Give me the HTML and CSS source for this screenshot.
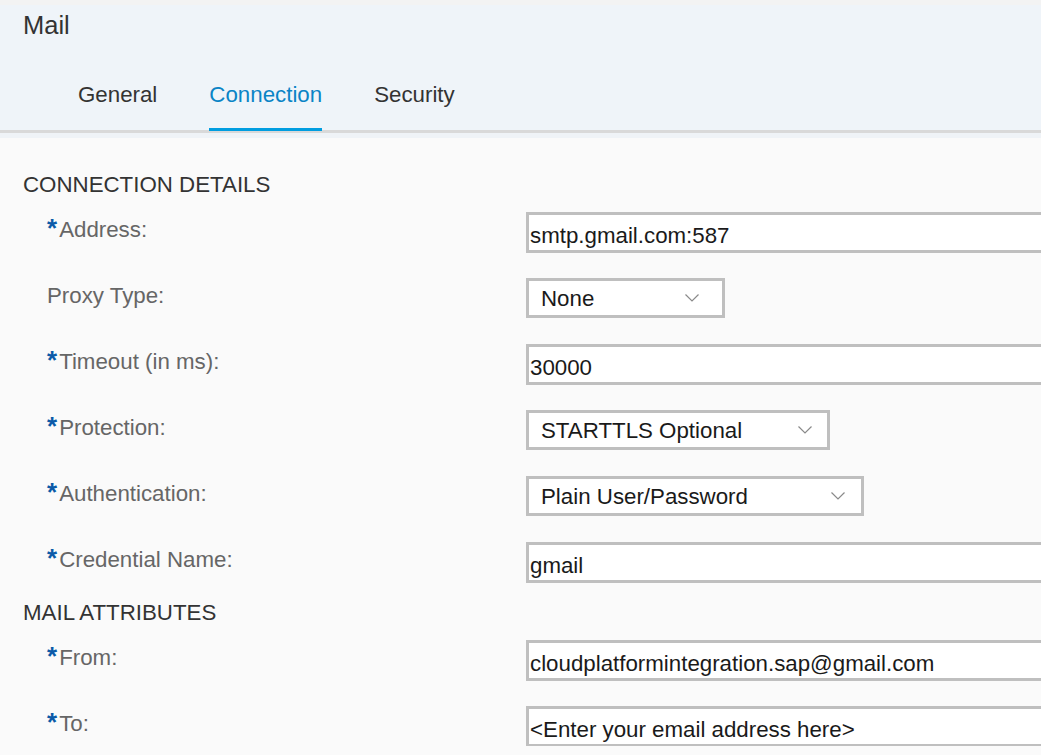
FILE: index.html
```html
<!DOCTYPE html>
<html lang="en">
<head>
<meta charset="utf-8">
<title>Mail</title>
<link rel="stylesheet" href="styles.css">
</head>
<body>
<div class="topstrip"></div>
<header class="header">
  <div class="title">Mail</div>
  <nav class="tabs">
    <div class="tab">General</div>
    <div class="tab active">Connection</div>
    <div class="tab">Security</div>
  </nav>
</header>
<div class="band"></div>
<main class="content">
  <section class="section">
    <h2 class="heading">CONNECTION DETAILS</h2>
    <div class="rows">
      <div class="row">
        <label class="label"><span class="req">*</span>Address:</label>
        <input class="field" type="text" value="smtp.gmail.com:587">
      </div>
      <div class="row">
        <label class="label">Proxy Type:</label>
        <div class="select select-proxy"><span>None</span><svg class="chev" width="14" height="8" viewBox="0 0 14 8"><path d="M0.5 0.5 L7 7 L13.5 0.5" fill="none" stroke="#8a8a8a" stroke-width="1.2"/></svg></div>
      </div>
      <div class="row">
        <label class="label"><span class="req">*</span>Timeout (in ms):</label>
        <input class="field" type="text" value="30000">
      </div>
      <div class="row">
        <label class="label"><span class="req">*</span>Protection:</label>
        <div class="select select-prot"><span>STARTTLS Optional</span><svg class="chev" width="14" height="8" viewBox="0 0 14 8"><path d="M0.5 0.5 L7 7 L13.5 0.5" fill="none" stroke="#8a8a8a" stroke-width="1.2"/></svg></div>
      </div>
      <div class="row">
        <label class="label"><span class="req">*</span>Authentication:</label>
        <div class="select select-auth"><span>Plain User/Password</span><svg class="chev" width="14" height="8" viewBox="0 0 14 8"><path d="M0.5 0.5 L7 7 L13.5 0.5" fill="none" stroke="#8a8a8a" stroke-width="1.2"/></svg></div>
      </div>
      <div class="row">
        <label class="label"><span class="req">*</span>Credential Name:</label>
        <input class="field" type="text" value="gmail">
      </div>
    </div>
  </section>
  <section class="section second">
    <h2 class="heading">MAIL ATTRIBUTES</h2>
    <div class="rows">
      <div class="row">
        <label class="label"><span class="req">*</span>From:</label>
        <input class="field" type="text" value="cloudplatformintegration.sap@gmail.com">
      </div>
      <div class="row">
        <label class="label"><span class="req">*</span>To:</label>
        <input class="field" type="text" value="&lt;Enter your email address here&gt;">
      </div>
    </div>
  </section>
</main>
</body>
</html>
```

FILE: styles.css
```css
html, body {
  margin: 0;
  padding: 0;
  overflow: hidden;
}
body {
  background: #fafafa;
  font-family: "Liberation Sans", Arial, sans-serif;
  color: #333;
}
.topstrip {
  height: 5px;
  background: #f3f3f3;
}
.header {
  background: #eff4f9;
  padding-top: 6px;
  border-bottom: 3px solid #d9d9d9;
}
.title {
  font-size: 25.5px;
  line-height: 29px;
  padding-left: 23px;
  color: #333;
}
.tabs {
  display: flex;
  padding-left: 78px;
  margin-top: 42px;
  gap: 52px;
}
.tab {
  font-size: 22.3px;
  line-height: 25px;
  padding-bottom: 21px;
  border-bottom: 3px solid transparent;
  margin-bottom: -1px;
  color: #333;
}
.tab.active {
  color: #0a84c6;
  border-bottom-color: #009de0;
}
.band {
  height: 5px;
  background: #eff3f7;
}
.content {
  padding: 34px 0 0 23px;
}
.heading {
  margin: 0 0 15px 0;
  font-size: 22.3px;
  line-height: 25px;
  font-weight: normal;
  color: #333;
}
.section.second {
  margin-top: 18px;
}
.rows {
  display: flex;
  flex-direction: column;
  gap: 26px;
  padding-left: 24px;
}
.row {
  display: grid;
  grid-template-columns: 479px 1fr;
  height: 40px;
}
.label {
  font-size: 22.3px;
  line-height: 25px;
  padding-top: 5px;
  color: #666;
  white-space: nowrap;
}
.req {
  color: #0b5aa8;
  font-weight: bold;
  font-size: 26px;
  line-height: 20px;
  margin-right: 2px;
}
.field {
  box-sizing: border-box;
  width: 100%;
  height: 41px;
  border: 3px solid #bfbfbf;
  border-right: none;
  background: #fff;
  padding: 7px 1px 0 1px;
  margin: 0;
  font-family: "Liberation Sans", Arial, sans-serif;
  font-size: 22.3px;
  line-height: 25px;
  color: #1a1a1a;
  outline: none;
}
.select {
  box-sizing: border-box;
  height: 40px;
  border: 3px solid #bfbfbf;
  background: #fff;
  display: flex;
  align-items: center;
  justify-content: space-between;
  padding: 0 16px 0 12px;
  font-size: 22.3px;
  line-height: 25px;
  color: #1a1a1a;
}
.select-proxy {
  width: 199px;
  padding-right: 23px;
}
.select-prot {
  width: 304px;
  padding-right: 15px;
}
.select-auth {
  width: 338px;
}
.chev {
  display: block;
}
```
